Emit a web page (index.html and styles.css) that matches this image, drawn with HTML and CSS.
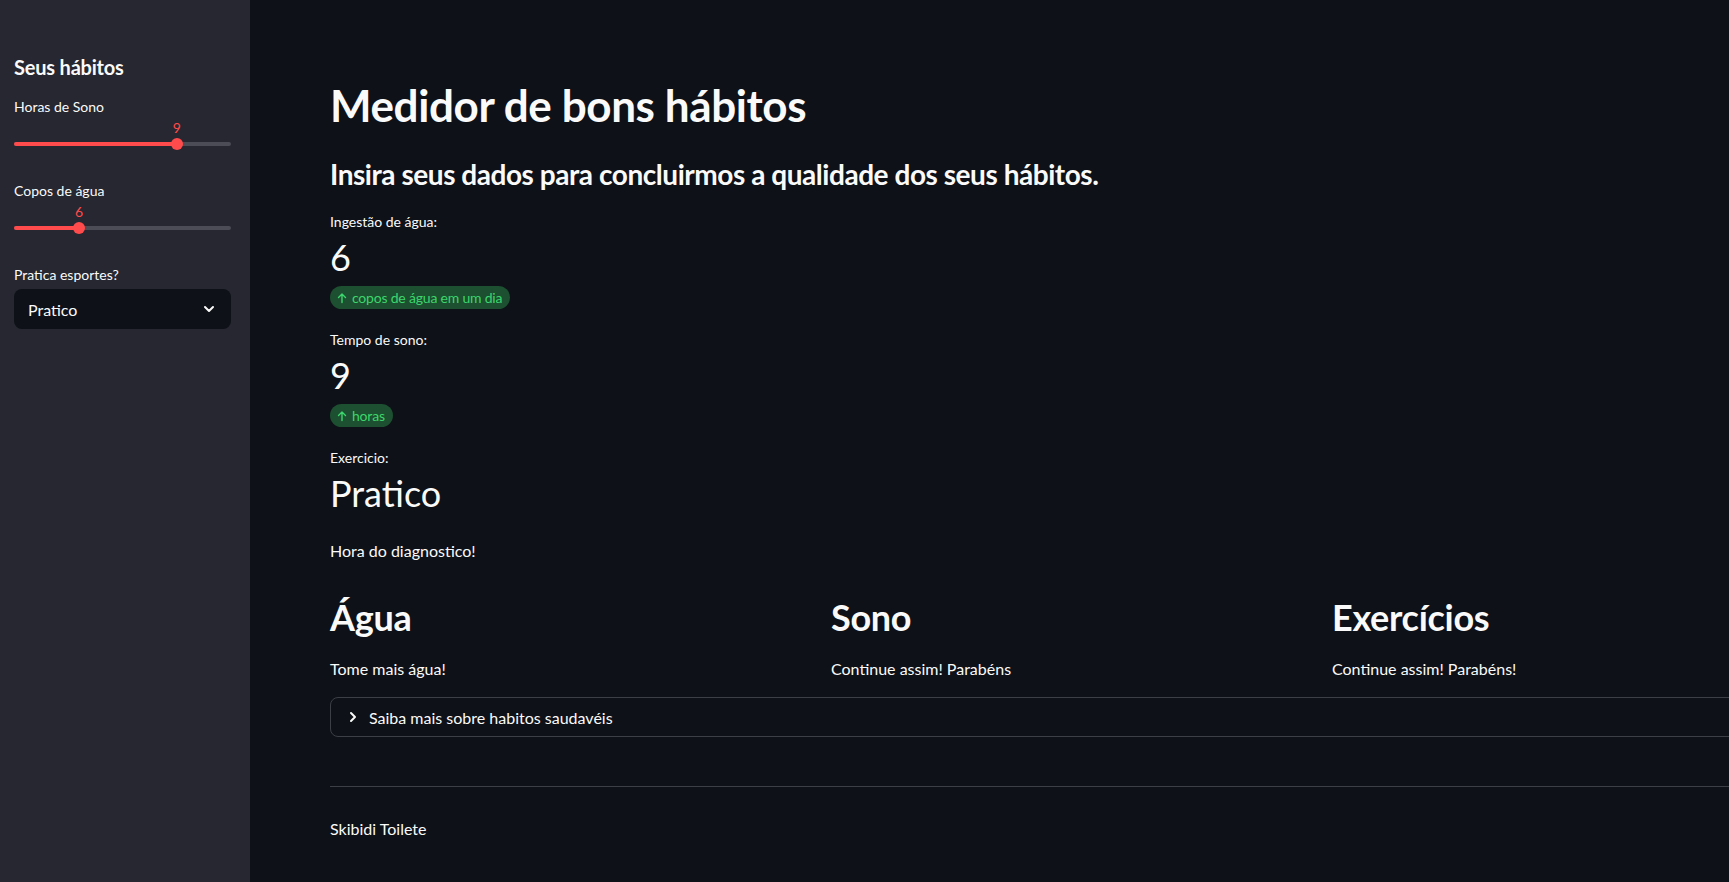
FILE: index.html
```html
<!DOCTYPE html>
<html lang="pt">
<head>
<meta charset="utf-8">
<title>Medidor de bons hábitos</title>
<link rel="stylesheet" href="styles.css">
</head>
<body>
<aside class="sidebar">
  <h2 class="side-title">Seus hábitos</h2>
  <div class="widget">
    <div class="wlabel">Horas de Sono</div>
    <div class="slider">
      <div class="track"><div class="fill" style="width:75%"></div></div>
      <div class="thumb" style="left:75%"><span class="thumb-val">9</span></div>
    </div>
  </div>
  <div class="widget">
    <div class="wlabel">Copos de água</div>
    <div class="slider">
      <div class="track"><div class="fill" style="width:30%"></div></div>
      <div class="thumb" style="left:30%"><span class="thumb-val">6</span></div>
    </div>
  </div>
  <div class="widget">
    <div class="wlabel">Pratica esportes?</div>
    <div class="select">
      <span>Pratico</span>
      <svg class="chev" width="16" height="16" viewBox="0 0 16 16"><polyline points="4,6 8,10 12,6" fill="none" stroke="#fafafa" stroke-width="2" stroke-linecap="round" stroke-linejoin="round"/></svg>
    </div>
  </div>
</aside>
<main class="main">
  <div class="content">
    <h1 class="title">Medidor de bons hábitos</h1>
    <h3 class="subtitle">Insira seus dados para concluirmos a qualidade dos seus hábitos.</h3>

    <div class="metric">
      <div class="mlabel">Ingestão de água:</div>
      <div class="mvalue">6</div>
      <div class="delta"><svg width="12" height="12" viewBox="0 0 12 12"><path d="M6 10.5V2M2.5 5.5L6 2l3.5 3.5" fill="none" stroke="#3dd56d" stroke-width="1.4" stroke-linecap="round" stroke-linejoin="round"/></svg>copos de água em um dia</div>
    </div>
    <div class="metric">
      <div class="mlabel">Tempo de sono:</div>
      <div class="mvalue">9</div>
      <div class="delta"><svg width="12" height="12" viewBox="0 0 12 12"><path d="M6 10.5V2M2.5 5.5L6 2l3.5 3.5" fill="none" stroke="#3dd56d" stroke-width="1.4" stroke-linecap="round" stroke-linejoin="round"/></svg>horas</div>
    </div>
    <div class="metric">
      <div class="mlabel">Exercicio:</div>
      <div class="mvalue">Pratico</div>
    </div>

    <p class="text diag">Hora do diagnostico!</p>

    <div class="cols">
      <div class="col">
        <h2 class="colhead">Água</h2>
        <p class="text">Tome mais água!</p>
      </div>
      <div class="col">
        <h2 class="colhead">Sono</h2>
        <p class="text">Continue assim! Parabéns</p>
      </div>
      <div class="col">
        <h2 class="colhead">Exercícios</h2>
        <p class="text">Continue assim! Parabéns!</p>
      </div>
    </div>

    <div class="expander">
      <svg width="16" height="16" viewBox="0 0 16 16"><polyline points="6,4 10,8 6,12" fill="none" stroke="#fafafa" stroke-width="2" stroke-linecap="round" stroke-linejoin="round"/></svg>
      <span>Saiba mais sobre habitos saudavéis</span>
    </div>

    <hr class="divider">

    <p class="text footer">Skibidi Toilete</p>
  </div>
</main>
</body>
</html>
```

FILE: styles.css
```css
* { box-sizing: border-box; }
html, body {
  margin: 0;
  height: 882px;
  overflow: hidden;
}
body {
  display: flex;
  background: #0e1117;
  color: #fafafa;
  font-family: Lato, "Liberation Sans", sans-serif;
}
.sidebar {
  width: 250px;
  flex: 0 0 250px;
  height: 882px;
  background: #262730;
  padding: 54px 19px 0 14px;
}
.side-title {
  margin: 0 0 17px;
  font-size: 20px;
  line-height: 26px;
  font-weight: 700;
  letter-spacing: -0.2px;
}
.widget { margin-bottom: 18px; }
.wlabel {
  font-size: 14px;
  line-height: 20px;
}
.slider {
  position: relative;
  height: 46px;
  padding-top: 25px;
}
.track {
  height: 4px;
  border-radius: 2px;
  background: #4b4c55;
  overflow: hidden;
}
.fill {
  height: 4px;
  background: #ff4b4b;
}
.thumb {
  position: absolute;
  top: 21px;
  width: 12px;
  height: 12px;
  margin-left: -6px;
  border-radius: 50%;
  background: #ff4b4b;
}
.thumb-val {
  position: absolute;
  bottom: 14px;
  left: 50%;
  transform: translateX(-50%);
  color: #ff4b4b;
  font-size: 14px;
  line-height: 16px;
}
.select {
  margin-top: 4px;
  height: 40px;
  border-radius: 8px;
  background: #0e1117;
  display: flex;
  align-items: center;
  justify-content: space-between;
  padding: 0 14px;
  font-size: 16px;
}
.main {
  flex: 0 0 auto;
  padding: 78px 0 0 80px;
}
.content { width: 1487px; }
.title {
  margin: 0 0 24px;
  font-size: 44px;
  line-height: 54px;
  font-weight: 700;
  letter-spacing: -0.4px;
}
.subtitle {
  margin: 0 0 20px;
  font-size: 28px;
  line-height: 36px;
  font-weight: 700;
  letter-spacing: -0.45px;
}
.metric { margin-bottom: 21px; }
.mlabel {
  font-size: 14px;
  line-height: 20px;
}
.mvalue {
  font-size: 36px;
  line-height: 50px;
  font-weight: 400;
}
.delta {
  display: inline-flex;
  align-items: center;
  gap: 4px;
  height: 23px;
  margin-top: 4px;
  padding: 0 8px 0 6px;
  border-radius: 12px;
  background: #1c5030;
  color: #3dd56d;
  font-size: 14px;
  letter-spacing: -0.2px;
}
.text {
  margin: 0;
  font-size: 16px;
  line-height: 24px;
}
.diag { margin: 10px 0 32px; }
.cols {
  display: flex;
  gap: 16px;
}
.col { flex: 1 1 0; }
.colhead {
  margin: 0 0 18px;
  font-size: 36px;
  line-height: 44px;
  font-weight: 700;
  letter-spacing: -0.3px;
}
.expander {
  margin-top: 16px;
  height: 40px;
  border: 1px solid #3d3f46;
  border-radius: 8px;
  display: flex;
  align-items: center;
  gap: 8px;
  padding: 0 14px;
  font-size: 16px;
}
.divider {
  margin: 49px 0 0;
  border: 0;
  border-top: 1px solid #3d3f46;
}
.footer { margin-top: 30px; }
```
